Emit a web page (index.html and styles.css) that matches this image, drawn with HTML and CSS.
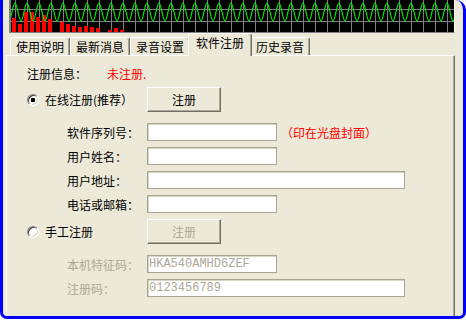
FILE: index.html
```html
<!DOCTYPE html>
<html lang="zh-CN">
<head>
    <meta charset="UTF-8">
    <meta name="viewport" content="width=device-width, initial-scale=1.0">
    <title>软件注册</title>
    <link rel="stylesheet" href="styles.css">
</head>
<body>
    <div class="window">
        <div class="scope">
            <svg width="443" height="32" viewBox="0 0 443 32">
                <defs>
                    <pattern id="grid" x="4" y="9" width="12" height="12" patternUnits="userSpaceOnUse">
                        <path d="M0.5 0V12M0 0.5H12" stroke="#808080" fill="none"/>
                    </pattern>
                    <pattern id="wave" x="-2" y="0" width="12" height="32" patternUnits="userSpaceOnUse">
                        <path d="M0 21C2.19 21 3.81 3 6 3S9.81 21 12 21" stroke="#00f000" stroke-width="1.2" fill="none"/>
                    </pattern>
                </defs>
                <rect width="443" height="32" fill="#000"/>
                <rect width="443" height="32" fill="url(#grid)"/>
                <!-- level meter -->
                <g fill="#ff0000">
                    <rect x="1" y="18" width="4" height="14"/>
                    <rect x="7" y="24" width="4" height="8"/>
                    <rect x="13" y="12" width="4" height="20"/>
                    <rect x="19" y="12" width="4" height="20"/>
                    <rect x="25" y="17" width="4" height="15"/>
                    <rect x="31" y="15" width="4" height="17"/>
                    <rect x="37" y="19" width="4" height="13"/>
                    <rect x="49" y="22" width="4" height="10"/>
                    <rect x="55" y="24" width="4" height="8"/>
                    <rect x="61" y="26" width="4" height="6"/>
                    <rect x="67" y="27" width="4" height="5"/>
                    <rect x="73" y="26" width="4" height="6"/>
                    <rect x="79" y="27" width="4" height="5"/>
                    <rect x="85" y="28" width="4" height="4"/>
                    <rect x="97" y="30" width="4" height="2"/>
                    <rect x="103" y="28" width="4" height="4"/>
                    <rect x="109" y="30" width="4" height="2"/>
                </g>
                <rect width="443" height="32" fill="url(#wave)"/>
            </svg>
        </div>

        <div class="tabs">
            <div class="tab">使用说明</div>
            <div class="tab">最新消息</div>
            <div class="tab">录音设置</div>
            <div class="tab active">软件注册</div>
            <div class="tab">历史录音</div>
        </div>

        <div class="panel">
            <div class="status">
                <span class="caption">注册信息：</span>
                <span class="warn">未注册.</span>
            </div>

            <div class="option">
                <div class="radio-label"><span class="radio checked"></span>在线注册(推荐）</div>
                <button class="btn">注册</button>
            </div>
            <div class="field">
                <label>软件序列号：</label>
                <input type="text" class="short">
                <span class="hint">（印在光盘封面）</span>
            </div>
            <div class="field">
                <label>用户姓名：</label>
                <input type="text" class="short">
            </div>
            <div class="field">
                <label>用户地址：</label>
                <input type="text" class="wide">
            </div>
            <div class="field">
                <label>电话或邮箱：</label>
                <input type="text" class="short">
            </div>

            <div class="option manual">
                <div class="radio-label"><span class="radio"></span>手工注册</div>
                <button class="btn" disabled>注册</button>
            </div>
            <div class="field off">
                <label>本机特征码：</label>
                <input type="text" class="short" value="HKA540AMHD6ZEF" disabled>
            </div>
            <div class="field off">
                <label>注册码：</label>
                <input type="text" class="wide" value="0123456789" disabled>
            </div>
        </div>
    </div>
</body>
</html>
```

FILE: styles.css
```css
body {
    margin: 0;
    background-color: #fff;
    font-family: "Noto Sans CJK SC", sans-serif;
    font-size: 12px;
    color: #000;
}
.window {
    width: 466px;
    height: 319px;
    box-sizing: border-box;
    border: 3px solid #0000ff;
    border-top: 0;
    border-radius: 0 10px 7px 7px;
    background-color: #ece9d8;
    overflow: hidden;
}
.scope {
    display: flex;
    width: 446px;
    margin-left: 6px;
    border-left: 2px solid #808080;
    border-bottom: 1px solid #808080;
    border-right: 1px solid #fff;
    box-sizing: border-box;
}
.scope svg {
    display: block;
}
.tabs {
    display: flex;
    align-items: flex-end;
    height: 22px;
    padding-left: 7px;
}
.tab {
    height: 18px;
    box-sizing: border-box;
    padding: 0 5px;
    line-height: 17px;
    border-top: 1px solid #fff;
    border-left: 1px solid #fff;
    border-right: 1px solid #716f64;
    border-radius: 3px 3px 0 0;
    box-shadow: inset -1px 0 #aca899;
    white-space: nowrap;
}
.tab.active {
    height: 23px;
    margin: 0 -2px -1px;
    padding: 0 7px;
    position: relative;
    z-index: 1;
    background-color: #ece9d8;
}
.panel {
    margin-left: 3px;
    width: 449px;
    height: 300px;
    box-sizing: border-box;
    padding: 10px 0 0 20px;
    border-top: 1px solid #fff;
    border-left: 1px solid #fff;
    border-right: 1px solid #716f64;
    box-shadow: inset -1px 0 #aca899;
}
.status {
    display: flex;
    height: 16px;
    line-height: 16px;
    margin-bottom: 5px;
}
.caption {
    width: 80px;
}
.warn,
.hint {
    color: #ff0000;
}
.option {
    display: flex;
    align-items: center;
    height: 25px;
    margin-bottom: 11px;
}
.option.manual {
    margin-top: 4px;
}
.radio-label {
    display: flex;
    align-items: center;
    gap: 6px;
    width: 120px;
}
.radio {
    width: 12px;
    height: 12px;
    box-sizing: border-box;
    border-radius: 50%;
    border: 1px solid;
    border-color: #808080 #fff #fff #808080;
    box-shadow: inset 1px 1px #404040, inset -1px -1px #d4d0c8;
    background-color: #fff;
}
.radio.checked {
    background: radial-gradient(circle, #000 2px, #fff 2.6px);
}
.btn {
    width: 74px;
    height: 25px;
    padding: 0;
    font-family: inherit;
    font-size: 12px;
    color: #000;
    background-color: #ece9d8;
    border: 1px solid;
    border-color: #fff #716f64 #716f64 #fff;
    box-shadow: inset -1px -1px #aca899;
}
.btn:disabled {
    color: #aca899;
}
.field {
    display: flex;
    align-items: center;
    height: 18px;
    margin-bottom: 6px;
    padding-left: 40px;
}
.field label {
    width: 80px;
}
.field input {
    height: 18px;
    box-sizing: border-box;
    padding: 0 1px;
    border: 1px solid #a7a391;
    box-shadow: inset 1px 1px #d8d5c7;
    background-color: #fff;
    font-family: "Liberation Mono", monospace;
    font-size: 12px;
    outline: none;
}
.field input.short {
    width: 130px;
}
.field input.wide {
    width: 258px;
}
.field input:disabled {
    background-color: #fff;
    color: #aca899;
}
.field.off label {
    color: #aca899;
}
.hint {
    margin-left: 4px;
}
```
